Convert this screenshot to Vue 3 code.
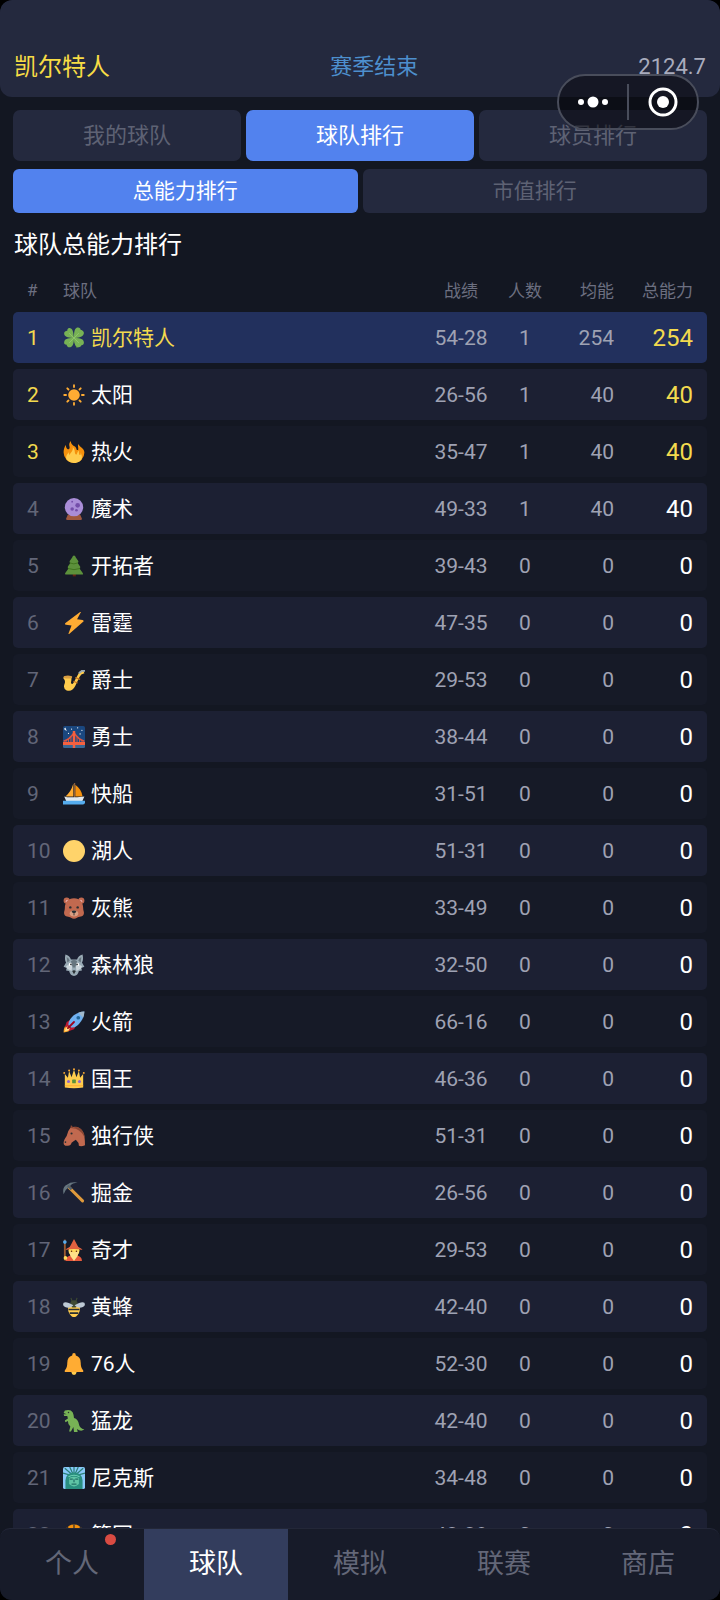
<script setup>
import { ref } from 'vue'

const icons = {
  clover: '<path d="M17 18c1 6 3 11 5 16l3-1c-3-5-5-10-5-16z" fill="#5c913b"/><path d="M18 18C17 12 17 3 12 2 8 1 7 4 7 6 4 6 1 8 2 12c1 5 9 6 16 6zM18 18c0-6 0-15 5-17 3-1 6 1 6 4 3 0 6 3 5 6-1 5-9 7-16 7zM18 18C12 18 3 18 2 24c-1 3 1 5 4 5 0 3 3 5 6 4 5-1 6-9 6-15zM18 18c6 0 15 0 16 6 1 3-1 6-4 6 0 2-3 4-6 3-5-2-6-9-6-15z" fill="#77b255"/><path d="m10 10 16 16M26 10 10 26" stroke="#8fc66d" stroke-width="1.5"/>',
  sun: '<circle cx="18" cy="18" r="9.5" fill="#ffac33"/><path d="M18 2v3M18 31v3M2 18h3M31 18h3M7 7l2 2M27 27l2 2M7 29l2-2M27 9l2-2" stroke="#ffac33" stroke-width="3" stroke-linecap="round"/>',
  fire: '<path d="M35 19a17 17 0 0 1-34 0c0-5 1-9 4-13-1 5 3 9 5 7 3-3-3-7 3-13-1 8 9 8 9 13 0 2 3 3 3 0 0-3-1-5 0-8 2 5 10 7 10 14z" fill="#f4900c"/><path d="M28 23c-2 0-2-5-2-7-4 2-2 7-5 6-3-2 0-7-5-12 1 7-4 9-5 13-1-1-2-3-1-5-3 3-5 6-5 10 0 3 6 8 13 8s13-4 13-9c0-3-1-5-2-8 0 2 0 4-1 4z" fill="#ffcc4d"/>',
  crystal: '<path d="M5 34l3-7h20l3 7q0 2-2 2H7q-2 0-2-2z" fill="#a0583f"/><circle cx="18" cy="15" r="15" fill="#aa8dd8"/><g fill="#744eaa"><circle cx="24" cy="12" r="3.8"/><circle cx="15" cy="18" r="2.9"/><circle cx="22" cy="20" r="2.2"/><circle cx="15" cy="6" r="1.5"/></g>',
  tree: '<path d="M16 29h5v6h-5z" fill="#662113"/><path d="M18 1q2 0 3 3l4 6q1 2-1 3l4 6q1 2-1 3l5 7q2 3-1 3H6q-4 0-2-3l5-7q-2-1-1-3l4-6q-2-1-1-3l4-6q1-3 3-3z" fill="#5c913b"/><path d="M11 13q7 3 13 0M8 22q10 4 20 0" fill="none" stroke="#3e721d" stroke-width="1.5"/>',
  bolt: '<path d="M28 0 4 18q-2 2 1 3l9 1-5 13q0 2 2 0l22-19q2-2-1-3l-9-1 6-11q1-2-1-1z" fill="#ffac33"/>',
  sax: '<path d="M33 2q-5-1-8 6l-8 15q-2 3-4 0 1-6 1-10H2q-2 0-1 3 3 2 2 7-4 9 3 12 9 3 14-7l7-15q2-5 8-6z" fill="#ffcc4d"/><ellipse cx="8" cy="13" rx="7" ry="2.5" fill="#d99e42"/><path d="m20 14 8 3M17 20l7 3" stroke="#c4741f" stroke-width="2"/><path d="m26 7 5-4h5" fill="none" stroke="#99aab5" stroke-width="3"/>',
  bridge: '<rect width="36" height="36" rx="3" fill="#1a477f"/><path d="M0 30h36v3q0 3-3 3H3q-3 0-3-3z" fill="#386794"/><g fill="#fff"><path d="M5 3q-2 3 2 4-4 1-5-2 0-2 3-2z"/><circle cx="14" cy="5" r="1"/><circle cx="24" cy="3" r="1"/><circle cx="31" cy="7" r="1"/><circle cx="9" cy="12" r="1"/><circle cx="28" cy="13" r="1"/></g><path d="M1 25Q11 22 18 11q7 11 17 14" fill="none" stroke="#dd5640" stroke-width="2.5"/><path d="M5 23v5M9 21v7M13 17v11M23 17v11M27 21v7M31 23v5" stroke="#dd5640" stroke-width="1.5"/><path d="M0 26h36v5H0zM16 8h4v28h-4z" fill="#f4603f"/>',
  boat: '<path d="M17 1v21H4Q13 15 17 1z" fill="#ffac33"/><path d="M20 3q10 7 12 19H20z" fill="#f4900c"/><path d="M18 0h2v25h-2z" fill="#8b5e3c"/><path d="M2 22q7 3 33 0l-4 9H6z" fill="#e1e8ed"/><path d="M0 29h36v3q0 3-3 3H0z" fill="#55acee"/>',
  moon: '<circle cx="18" cy="18" r="18" fill="#ffd36a"/>',
  bear: '<circle cx="6" cy="6" r="5" fill="#c1694f"/><circle cx="30" cy="6" r="5" fill="#c1694f"/><circle cx="7" cy="7" r="2.5" fill="#e6aaaa"/><circle cx="29" cy="7" r="2.5" fill="#e6aaaa"/><path d="M18 2c10 0 15 7 15 16 0 5 2 6 1 10-1 5-8 4-11 6q-5 3-10 0C10 32 3 33 2 28c-1-4 1-5 1-10C3 9 8 2 18 2z" fill="#c1694f"/><ellipse cx="18" cy="27" rx="7" ry="5" fill="#d99e82"/><path d="M14 23q4-2 8 0-1 4-4 4t-4-4z" fill="#292f33"/><circle cx="12" cy="17" r="2" fill="#292f33"/><circle cx="24" cy="17" r="2" fill="#292f33"/><path d="M18 27v3" stroke="#292f33" stroke-width="1.5"/>',
  wolf: '<path d="M4 1q7 2 9 8h10q2-6 9-8 2 9-1 13l4 7-5 2 1 4-5 1q-2 8-8 8t-8-8l-5-1 1-4-5-2 4-7Q2 10 4 1z" fill="#99aab5"/><path d="M6 5q4 2 5 6l-4 3zM30 5q-4 2-5 6l4 3z" fill="#66757f"/><path d="M13 12q5-4 10 0l-3 10h-4z" fill="#66757f"/><path d="M5 20q5-4 10 0l-1 8-7-4zM31 20q-5-4-10 0l1 8 7-4z" fill="#ccd6dd"/><circle cx="12" cy="17" r="2.5" fill="#fff"/><circle cx="24" cy="17" r="2.5" fill="#fff"/><circle cx="13" cy="17" r="1.4" fill="#292f33"/><circle cx="23" cy="17" r="1.4" fill="#292f33"/><path d="M15 28q3-3 6 0l-3 5z" fill="#292f33"/>',
  rocket: '<path d="M1 35q0-9 5-12l7 7q-3 5-12 5z" fill="#ffac33"/><path d="m3 33q1-6 4-7l4 4q-2 3-8 3z" fill="#ffe08a"/><path d="m13 14-7 4-3 9 8-3zM22 23l-4 7-9 3 4-8z" fill="#be1931"/><path d="M35 1Q20 2 12 13q-4 6-3 10l4 4q5 1 10-3Q34 15 35 1z" fill="#6fb0f0"/><path d="M35 1q-5 0-10 2l8 8q2-5 2-10z" fill="#a0b8cb"/><circle cx="25" cy="11" r="3" fill="#226699"/><path d="m8 28 10-10" stroke="#a0041e" stroke-width="3" stroke-linecap="round"/>',
  crown: '<path d="M3 32V10l5 6 2-11 4 10 4-12 4 12 4-10 2 11 5-6v22q-15 2-30 0z" fill="#ffcc4d"/><g fill="#ffac33"><circle cx="2" cy="8" r="1.6"/><circle cx="10" cy="4" r="1.6"/><circle cx="18" cy="2" r="1.6"/><circle cx="26" cy="4" r="1.6"/><circle cx="34" cy="8" r="1.6"/></g><circle cx="9" cy="22" r="2.5" fill="#9266cc"/><circle cx="27" cy="22" r="2.5" fill="#9266cc"/><rect x="15" y="19" width="6" height="6" rx="1" fill="#5c913b"/><path d="M3 29h30" stroke="#ffac33" stroke-width="1.5"/>',
  horse: '<path d="M12 5q3-2 8-2 9 1 13 9 3 7 3 21-6 3-10 1 0-6-5-10-4 2-7 5-1 5-6 5-7 1-7-5 0-4 5-11Q8 9 12 5z" fill="#c1694f"/><path d="M12 5q1-4 1-5l4 4 5-1q12 2 14 19-4-11-15-16z" fill="#8a4633"/><circle cx="14" cy="14" r="1.7" fill="#292f33"/><circle cx="4" cy="28" r="1.4" fill="#292f33"/>',
  pick: '<path d="m10 9 22 22" stroke="#e09a3c" stroke-width="5" stroke-linecap="round"/><path d="M1 20Q-2 8 7 4q6-5 17-3-9 1-12 5l-4 4q-5 3-7 10z" fill="#66757f"/><path d="m8 6 6 6" stroke="#55616a" stroke-width="4"/>',
  mage: '<path d="M3 1v34" stroke="#9a5c32" stroke-width="3"/><circle cx="3" cy="5" r="3" fill="#55acee"/><path d="M4 36q0-8 10-9h8q9 1 9 9z" fill="#e75a3d"/><circle cx="18" cy="19" r="9" fill="#ffdc5d"/><path d="m18 0 7 13q6 2 7 5-14-3-28 0 1-3 7-5z" fill="#e2613f"/><path d="M10 20q8 3 16 0l-2 8-6 8-6-8z" fill="#ffe08a"/><circle cx="14" cy="20" r="1.2" fill="#662113"/><circle cx="22" cy="20" r="1.2" fill="#662113"/><circle cx="4" cy="31" r="3" fill="#ffdc5d"/>',
  bee: '<path d="M13 3q1 6 5 8 4-2 5-8" fill="none" stroke="#3d4a32" stroke-width="1.8"/><path d="M9 16h18q3 10-5 17-4 3-8 0-8-7-5-17z" fill="#ffcc4d"/><circle cx="18" cy="13" r="6" fill="#3e4a35"/><path d="M9 22h18M11 28h14" stroke="#292f33" stroke-width="2.5"/><path d="M17 15Q5 8 1 11q-3 6 5 8 7 1 11-4zM19 15q12-7 16-4 3 6-5 8-7 1-11-4z" fill="#bdc9d5"/>',
  bell: '<circle cx="18" cy="32" r="4" fill="#ffcc4d"/><path d="M18 0q3 0 3 4 8 2 8 12 0 8 3 11 2 2 1 4H3q-1-2 1-4 3-3 3-11 0-10 8-12 0-4 3-4z" fill="#ffac33"/>',
  dino: '<path d="M3 1q9-3 13 3 2 5 2 9 7 2 8 10 1 7 9 9-6 4-12-1l1 5h-6l-1-8-4 7h-3l2-8q-4-3-4-9l-4 2-1-3 5-3-1-4H2l-1-3h5L1 5z" fill="#77b255"/><circle cx="9" cy="4" r="1.2" fill="#292f33"/>',
  liberty: '<rect width="36" height="36" rx="3" fill="#88c9f9"/><path d="m18 15L3 2M18 15 11 0M18 15V0M18 15 25 0M18 15 33 2M18 15 0 10M18 15l18-5" stroke="#2a8077" stroke-width="2"/><path d="M4 36V22Q5 9 18 9t14 13v14z" fill="#2a8f80"/><path d="M10 18q8-4 16 0v10q-8 8-16 0z" fill="#5fc4a5"/><path d="M11 20h5M20 20h5M14 28h8M18 20v5" stroke="#226f67" stroke-width="2"/><path d="M9 16q9-5 18 0" fill="none" stroke="#71d3b4" stroke-width="2"/>',
  ball: '<circle cx="18" cy="18" r="17" fill="#f4900c"/><path d="M18 1v34M1 18h34M7 5q10 13 0 26M29 5q-10 13 0 26" fill="none" stroke="#292f33" stroke-width="2"/>'
}

const teams = [
  ['clover', '凯尔特人', '54-28', 1, 254],
  ['sun', '太阳', '26-56', 1, 40],
  ['fire', '热火', '35-47', 1, 40],
  ['crystal', '魔术', '49-33', 1, 40],
  ['tree', '开拓者', '39-43', 0, 0],
  ['bolt', '雷霆', '47-35', 0, 0],
  ['sax', '爵士', '29-53', 0, 0],
  ['bridge', '勇士', '38-44', 0, 0],
  ['boat', '快船', '31-51', 0, 0],
  ['moon', '湖人', '51-31', 0, 0],
  ['bear', '灰熊', '33-49', 0, 0],
  ['wolf', '森林狼', '32-50', 0, 0],
  ['rocket', '火箭', '66-16', 0, 0],
  ['crown', '国王', '46-36', 0, 0],
  ['horse', '独行侠', '51-31', 0, 0],
  ['pick', '掘金', '26-56', 0, 0],
  ['mage', '奇才', '29-53', 0, 0],
  ['bee', '黄蜂', '42-40', 0, 0],
  ['bell', '76人', '52-30', 0, 0],
  ['dino', '猛龙', '42-40', 0, 0],
  ['liberty', '尼克斯', '34-48', 0, 0],
  ['ball', '篮网', '43-39', 0, 0]
].map(([icon, name, record, count, power]) => ({ icon, name, record, count, power }))

const tabs = ['我的球队', '球队排行', '球员排行']
const tab = ref('球队排行')
const boards = ['总能力排行', '市值排行']
const board = ref('总能力排行')
const pages = ['个人', '球队', '模拟', '联赛', '商店']
const page = ref('球队')
</script>

<template>
  <div class="app">
    <header class="top">
      <span class="club">凯尔特人</span>
      <span class="season">赛季结束</span>
      <span class="funds">2124.7</span>
    </header>

    <div class="capsule">
      <button class="cap-btn" aria-label="更多">
        <svg width="32" height="12" viewBox="0 0 32 12" fill="#fff">
          <circle cx="4" cy="6" r="3" /><circle cx="16" cy="6" r="5.5" /><circle cx="28" cy="6" r="3" />
        </svg>
      </button>
      <i class="cap-line"></i>
      <button class="cap-btn" aria-label="关闭">
        <svg width="30" height="30" viewBox="0 0 30 30">
          <circle cx="15" cy="15" r="13" fill="none" stroke="#fff" stroke-width="3" />
          <circle cx="15" cy="15" r="6" fill="#fff" />
        </svg>
      </button>
    </div>

    <main class="content">
      <div class="tabs">
        <button v-for="t in tabs" :key="t" class="tab" :class="{ on: t === tab }" @click="tab = t">{{ t }}</button>
      </div>
      <div class="tabs boards">
        <button v-for="b in boards" :key="b" class="tab" :class="{ on: b === board }" @click="board = b">{{ b }}</button>
      </div>
      <h1 class="title">球队总能力排行</h1>

      <table class="ranks">
        <thead>
          <tr>
            <th class="rank">#</th>
            <th class="team">球队</th>
            <th class="record">战绩</th>
            <th class="count">人数</th>
            <th class="avg">均能</th>
            <th class="total">总能力</th>
          </tr>
        </thead>
        <tbody>
          <tr v-for="(t, i) in teams" :key="t.name" :class="{ mine: i === 0, podium: i < 3 }">
            <td class="rank">{{ i + 1 }}</td>
            <td class="team">
              <div class="team-in">
                <svg class="icon" viewBox="0 0 36 36" aria-hidden="true" v-html="icons[t.icon]"></svg>
                <span>{{ t.name }}</span>
              </div>
            </td>
            <td class="record">{{ t.record }}</td>
            <td class="count">{{ t.count }}</td>
            <td class="avg">{{ t.power }}</td>
            <td class="total">{{ t.power }}</td>
          </tr>
        </tbody>
      </table>
    </main>

    <nav class="nav">
      <button v-for="p in pages" :key="p" class="nav-btn" :class="{ on: p === page }" @click="page = p">
        <span class="nav-label">{{ p }}<i v-if="p === '个人'" class="dot"></i></span>
      </button>
    </nav>
  </div>
</template>

<style>
body {
  background: #000;
}
</style>

<style scoped>
.app {
  position: relative;
  display: flex;
  flex-direction: column;
  height: 100vh;
  overflow: hidden;
  border-radius: 12px;
  background: #131722;
  color: #fff;
  font-family: Roboto, "Noto Sans CJK SC", sans-serif;
}
button {
  margin: 0;
  padding: 0;
  border: 0;
  background: none;
  color: inherit;
  font: inherit;
  cursor: pointer;
}
.top {
  flex: none;
  display: flex;
  justify-content: space-between;
  align-items: center;
  padding: 49px 14px 12px;
  border-radius: 12px;
  background: #24293e;
  line-height: 36px;
}
.club {
  color: #f7dc45;
  font-size: 24px;
}
.season {
  color: #4d8fcd;
  font-size: 22px;
}
.funds {
  color: #a9acbd;
  font-size: 22px;
}
.capsule {
  position: absolute;
  top: 74px;
  right: 21px;
  display: flex;
  align-items: center;
  box-sizing: border-box;
  width: 142px;
  height: 56px;
  border: 2px solid #494d5b;
  border-radius: 28px;
  background: rgba(5, 6, 10, 0.5);
}
.cap-btn {
  flex: 1;
  display: flex;
  justify-content: center;
}
.cap-line {
  width: 2px;
  height: 36px;
  background: #494d5b;
}
.content {
  flex: 1;
  min-height: 0;
  overflow-y: auto;
  scrollbar-width: none;
  padding: 13px 13px 0;
}
.tabs {
  display: flex;
  gap: 5px;
}
.tab {
  flex: 1 1 0;
  border-radius: 7px;
  background: #24293e;
  color: #5e6274;
  font-size: 22px;
  line-height: 51px;
}
.boards {
  margin-top: 8px;
}
.boards .tab {
  border-radius: 6px;
  font-size: 21px;
  line-height: 44px;
}
.tab.on {
  background: #5282ee;
  color: #fff;
}
.title {
  margin: 13px 0 0 1px;
  font-size: 24px;
  font-weight: 400;
  line-height: 38px;
}
.ranks {
  width: 100%;
  margin-top: 3px;
  border-collapse: separate;
  border-spacing: 0 6px;
  table-layout: fixed;
}
th {
  height: 33px;
  padding: 0;
  color: #6c6f80;
  font-size: 17px;
  font-weight: 400;
}
td {
  height: 51px;
  padding: 0;
  background: #161a27;
  color: #9fa2b3;
  font-size: 21px;
  line-height: 30px;
}
tbody tr:nth-child(even) td {
  background: #1c2033;
}
tbody tr.mine td {
  background: #22305d;
}
.rank {
  width: 36px;
  padding-left: 14px;
  text-align: left;
}
td.rank {
  border-radius: 5px 0 0 5px;
  color: #626678;
}
.team {
  text-align: left;
}
td.team {
  color: #fff;
}
.team-in {
  display: flex;
  align-items: center;
  gap: 6px;
}
.icon {
  width: 22px;
  height: 22px;
}
.record {
  width: 80px;
  text-align: center;
}
.count {
  width: 48px;
  text-align: center;
}
.avg {
  width: 65px;
  text-align: right;
}
.total {
  width: 79px;
  padding-right: 14px;
  text-align: right;
}
td.total {
  border-radius: 0 5px 5px 0;
  color: #fff;
  font-size: 24px;
}
.podium td.rank,
.podium td.total,
.mine td.team {
  color: #f3da4e;
}
.nav {
  flex: none;
  display: flex;
  border-top: 1px solid #232738;
  border-radius: 10px;
  background: #171b29;
}
.nav-btn {
  flex: 1 1 0;
  color: #636778;
  font-size: 27px;
  line-height: 71px;
}
.nav-btn.on {
  background: #333d5d;
  color: #fff;
}
.nav-label {
  position: relative;
}
.dot {
  position: absolute;
  top: -14px;
  right: -17px;
  width: 11px;
  height: 11px;
  border-radius: 50%;
  background: #d94b42;
}
</style>
